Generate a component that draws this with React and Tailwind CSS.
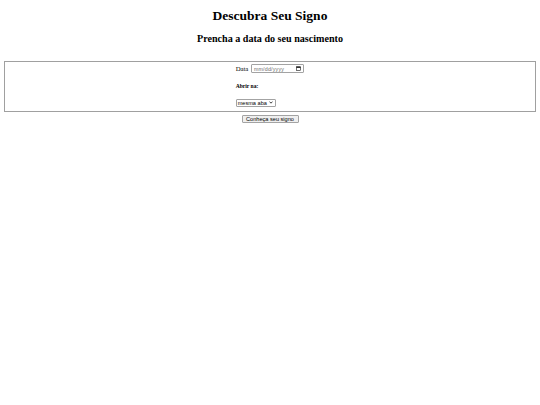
import React from "react";

const serif = { fontFamily: '"Liberation Serif", "Times New Roman", serif' };

function CalendarIcon() {
  return (
    <svg width="5" height="5" viewBox="0 0 10 10" className="block">
      <rect x="1" y="1.5" width="8" height="7.5" fill="none" stroke="#111" strokeWidth="1.2" />
      <rect x="1" y="1.5" width="8" height="2.2" fill="#111" />
    </svg>
  );
}

function Chevron() {
  return (
    <svg width="4" height="3" viewBox="0 0 8 6" className="block">
      <path d="M1 1.2 L4 4.4 L7 1.2" fill="none" stroke="#111" strokeWidth="1.6" />
    </svg>
  );
}

export default function App() {
  return (
    <div className="min-h-[405px] bg-white text-black" style={serif}>
      <h1 className="pt-[8px] text-center text-[13.5px] leading-[15px] font-bold">
        Descubra Seu Signo
      </h1>
      <h2 className="mt-[10px] text-center text-[10.1px] leading-[11px] font-bold">
        Prencha a data do seu nascimento
      </h2>

      <form className="mt-[17px]">
        <div className="mx-[4px] border border-[#a0a0a0] pt-[2px] pb-[4.5px]">
          <div className="flex justify-center">
            <div className="flex flex-col items-start">
              <div className="flex items-center gap-[3px]">
                <span className="text-[6.75px] leading-[9px]">Data</span>
                <div className="flex h-[9px] w-[53px] items-center justify-between rounded-[1px] border border-[#a3a3a3] pl-[1.5px] pr-[2.5px]">
                  <span className="font-['Liberation_Sans',sans-serif] text-[5.3px] leading-[6px] tracking-[0.2px] text-[#6d6d6d]">
                    mm/dd/yyyy
                  </span>
                  <CalendarIcon />
                </div>
              </div>

              <h5 className="mt-[10px] text-[5.6px] leading-[6.5px] font-bold">Abrir na:</h5>

              <div className="mt-[9.5px] flex h-[7.5px] w-[40px] items-center justify-between rounded-[1px] border border-[#a3a3a3] pl-[1px] pr-[1.5px]">
                <span className="font-['Liberation_Sans',sans-serif] text-[5.6px] leading-[6px]">
                  mesma aba
                </span>
                <Chevron />
              </div>
            </div>
          </div>
        </div>

        <div className="mt-[3px] flex justify-center">
          <button
            type="button"
            className="flex h-[8px] w-[57px] items-center justify-center rounded-[1px] border border-[#a3a3a3] bg-[#efefef] font-['Liberation_Sans',sans-serif] text-[5.6px] leading-[6px] text-black"
          >
            Conheça seu signo
          </button>
        </div>
      </form>
    </div>
  );
}
